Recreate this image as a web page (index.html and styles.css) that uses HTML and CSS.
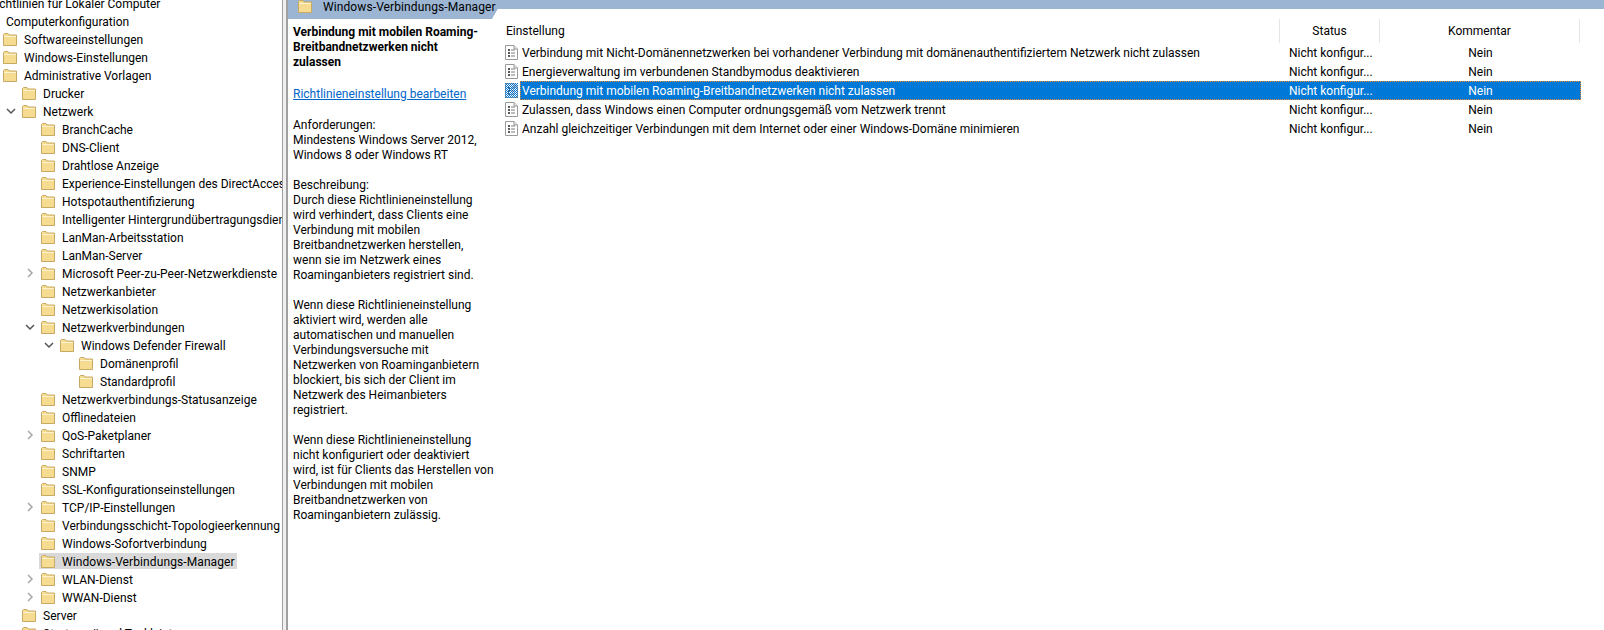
FILE: index.html
```html
<!DOCTYPE html>
<html lang="de">
<head>
  <meta charset="UTF-8">
  <title>Editor für lokale Gruppenrichtlinien</title>
  <link rel="stylesheet" href="styles.css">
</head>
<body>

  <svg class="defs" width="0" height="0">
    <symbol id="folder" viewBox="0 0 14 13">
      <path d="M.5 12.5V1.5l1-1h3.500l1 1.500h7.500v10.500z" fill="#f6dc91" stroke="#c8a963"/>
      <path d="M1 3.500h12" stroke="#fdf3cf"/>
    </symbol>
    <symbol id="policy" viewBox="0 0 13 15">
      <path d="M.5.500h8.500l3.500 3.500v10.500h-12z" fill="#fff" stroke="#9a9a9a"/>
      <path d="M9 .5v3.500h3.500" fill="#e6e6e6" stroke="#9a9a9a"/>
      <path d="M3 5h2M3 8h2M3 11h2" stroke="#222" stroke-width="1.400"/>
      <path d="M6 5h4M6 8h4M6 11h4" stroke="#7a7a7a"/>
    </symbol>
    <symbol id="open" viewBox="0 0 10 7">
      <path d="M1 1l4 4 4-4" fill="none" stroke="#555" stroke-width="1.500"/>
    </symbol>
    <symbol id="closed" viewBox="0 0 7 10">
      <path d="M1 1l4 4-4 4" fill="none" stroke="#a6a6a6" stroke-width="1.500"/>
    </symbol>
    <pattern id="dither" width="2" height="2" patternUnits="userSpaceOnUse">
      <rect width="1" height="1" fill="#0078d7"/>
      <rect x="1" y="1" width="1" height="1" fill="#0078d7"/>
    </pattern>
  </svg>

  <div class="window">

    <nav class="tree">
      <div class="row root-title"><span class="label">Richtlinien für Lokaler Computer</span></div>
      <div class="row root"><span class="label">Computerkonfiguration</span></div>
      <div class="row lvl-1"><span class="node"><svg class="folder"><use href="#folder"/></svg><span class="label">Softwareeinstellungen</span></span></div>
      <div class="row lvl-1"><span class="node"><svg class="folder"><use href="#folder"/></svg><span class="label">Windows-Einstellungen</span></span></div>
      <div class="row lvl-1"><span class="node"><svg class="folder"><use href="#folder"/></svg><span class="label">Administrative Vorlagen</span></span></div>
      <div class="row lvl-2"><span class="node"><svg class="folder"><use href="#folder"/></svg><span class="label">Drucker</span></span></div>
      <div class="row lvl-2"><svg class="arrow-open"><use href="#open"/></svg><span class="node"><svg class="folder"><use href="#folder"/></svg><span class="label">Netzwerk</span></span></div>
      <div class="row lvl-3"><span class="node"><svg class="folder"><use href="#folder"/></svg><span class="label">BranchCache</span></span></div>
      <div class="row lvl-3"><span class="node"><svg class="folder"><use href="#folder"/></svg><span class="label">DNS-Client</span></span></div>
      <div class="row lvl-3"><span class="node"><svg class="folder"><use href="#folder"/></svg><span class="label">Drahtlose Anzeige</span></span></div>
      <div class="row lvl-3"><span class="node"><svg class="folder"><use href="#folder"/></svg><span class="label">Experience-Einstellungen des DirectAccess-Clients</span></span></div>
      <div class="row lvl-3"><span class="node"><svg class="folder"><use href="#folder"/></svg><span class="label">Hotspotauthentifizierung</span></span></div>
      <div class="row lvl-3"><span class="node"><svg class="folder"><use href="#folder"/></svg><span class="label">Intelligenter Hintergrundübertragungsdienst</span></span></div>
      <div class="row lvl-3"><span class="node"><svg class="folder"><use href="#folder"/></svg><span class="label">LanMan-Arbeitsstation</span></span></div>
      <div class="row lvl-3"><span class="node"><svg class="folder"><use href="#folder"/></svg><span class="label">LanMan-Server</span></span></div>
      <div class="row lvl-3"><svg class="arrow-closed"><use href="#closed"/></svg><span class="node"><svg class="folder"><use href="#folder"/></svg><span class="label">Microsoft Peer-zu-Peer-Netzwerkdienste</span></span></div>
      <div class="row lvl-3"><span class="node"><svg class="folder"><use href="#folder"/></svg><span class="label">Netzwerkanbieter</span></span></div>
      <div class="row lvl-3"><span class="node"><svg class="folder"><use href="#folder"/></svg><span class="label">Netzwerkisolation</span></span></div>
      <div class="row lvl-3"><svg class="arrow-open"><use href="#open"/></svg><span class="node"><svg class="folder"><use href="#folder"/></svg><span class="label">Netzwerkverbindungen</span></span></div>
      <div class="row lvl-4"><svg class="arrow-open"><use href="#open"/></svg><span class="node"><svg class="folder"><use href="#folder"/></svg><span class="label">Windows Defender Firewall</span></span></div>
      <div class="row lvl-5"><span class="node"><svg class="folder"><use href="#folder"/></svg><span class="label">Domänenprofil</span></span></div>
      <div class="row lvl-5"><span class="node"><svg class="folder"><use href="#folder"/></svg><span class="label">Standardprofil</span></span></div>
      <div class="row lvl-3"><span class="node"><svg class="folder"><use href="#folder"/></svg><span class="label">Netzwerkverbindungs-Statusanzeige</span></span></div>
      <div class="row lvl-3"><span class="node"><svg class="folder"><use href="#folder"/></svg><span class="label">Offlinedateien</span></span></div>
      <div class="row lvl-3"><svg class="arrow-closed"><use href="#closed"/></svg><span class="node"><svg class="folder"><use href="#folder"/></svg><span class="label">QoS-Paketplaner</span></span></div>
      <div class="row lvl-3"><span class="node"><svg class="folder"><use href="#folder"/></svg><span class="label">Schriftarten</span></span></div>
      <div class="row lvl-3"><span class="node"><svg class="folder"><use href="#folder"/></svg><span class="label">SNMP</span></span></div>
      <div class="row lvl-3"><span class="node"><svg class="folder"><use href="#folder"/></svg><span class="label">SSL-Konfigurationseinstellungen</span></span></div>
      <div class="row lvl-3"><svg class="arrow-closed"><use href="#closed"/></svg><span class="node"><svg class="folder"><use href="#folder"/></svg><span class="label">TCP/IP-Einstellungen</span></span></div>
      <div class="row lvl-3"><span class="node"><svg class="folder"><use href="#folder"/></svg><span class="label">Verbindungsschicht-Topologieerkennung</span></span></div>
      <div class="row lvl-3"><span class="node"><svg class="folder"><use href="#folder"/></svg><span class="label">Windows-Sofortverbindung</span></span></div>
      <div class="row lvl-3"><span class="node current"><svg class="folder"><use href="#folder"/></svg><span class="label">Windows-Verbindungs-Manager</span></span></div>
      <div class="row lvl-3"><svg class="arrow-closed"><use href="#closed"/></svg><span class="node"><svg class="folder"><use href="#folder"/></svg><span class="label">WLAN-Dienst</span></span></div>
      <div class="row lvl-3"><svg class="arrow-closed"><use href="#closed"/></svg><span class="node"><svg class="folder"><use href="#folder"/></svg><span class="label">WWAN-Dienst</span></span></div>
      <div class="row lvl-2"><span class="node"><svg class="folder"><use href="#folder"/></svg><span class="label">Server</span></span></div>
      <div class="row lvl-2"><span class="node"><svg class="folder"><use href="#folder"/></svg><span class="label">Startmenü und Taskleiste</span></span></div>
    </nav>

    <div class="splitter"></div>

    <main class="content">
      <div class="band">
        <div class="tab">
          <svg class="folder"><use href="#folder"/></svg>
          <span>Windows-Verbindungs-Manager</span>
        </div>
      </div>

      <div class="panes">
        <section class="desc">
          <p class="desc-title">Verbindung mit mobilen Roaming-<br>Breitbandnetzwerken nicht<br>zulassen</p>
          <p class="desc-link"><a href="#">Richtlinieneinstellung bearbeiten</a></p>
          <p>Anforderungen:<br>Mindestens Windows Server 2012,<br>Windows 8 oder Windows RT</p>
          <p>Beschreibung:<br>Durch diese Richtlinieneinstellung<br>wird verhindert, dass Clients eine<br>Verbindung mit mobilen<br>Breitbandnetzwerken herstellen,<br>wenn sie im Netzwerk eines<br>Roaminganbieters registriert sind.</p>
          <p>Wenn diese Richtlinieneinstellung<br>aktiviert wird, werden alle<br>automatischen und manuellen<br>Verbindungsversuche mit<br>Netzwerken von Roaminganbietern<br>blockiert, bis sich der Client im<br>Netzwerk des Heimanbieters<br>registriert.</p>
          <p>Wenn diese Richtlinieneinstellung<br>nicht konfiguriert oder deaktiviert<br>wird, ist für Clients das Herstellen von<br>Verbindungen mit mobilen<br>Breitbandnetzwerken von<br>Roaminganbietern zulässig.</p>
        </section>

        <section class="list">
          <div class="list-head">
            <div class="col-name">Einstellung</div>
            <div class="col-status">Status</div>
            <div class="col-comment">Kommentar</div>
          </div>
          <div class="item">
            <svg class="policy"><use href="#policy"/></svg>
            <div class="cells">
              <div class="item-name">Verbindung mit Nicht-Domänennetzwerken bei vorhandener Verbindung mit domänenauthentifiziertem Netzwerk nicht zulassen</div>
              <div class="item-status">Nicht konfigur...</div>
              <div class="item-comment">Nein</div>
            </div>
          </div>
          <div class="item">
            <svg class="policy"><use href="#policy"/></svg>
            <div class="cells">
              <div class="item-name">Energieverwaltung im verbundenen Standbymodus deaktivieren</div>
              <div class="item-status">Nicht konfigur...</div>
              <div class="item-comment">Nein</div>
            </div>
          </div>
          <div class="item selected">
            <svg class="policy"><use href="#policy"/><rect class="dither" width="13" height="15"/></svg>
            <div class="cells">
              <div class="item-name">Verbindung mit mobilen Roaming-Breitbandnetzwerken nicht zulassen</div>
              <div class="item-status">Nicht konfigur...</div>
              <div class="item-comment">Nein</div>
            </div>
          </div>
          <div class="item">
            <svg class="policy"><use href="#policy"/></svg>
            <div class="cells">
              <div class="item-name">Zulassen, dass Windows einen Computer ordnungsgemäß vom Netzwerk trennt</div>
              <div class="item-status">Nicht konfigur...</div>
              <div class="item-comment">Nein</div>
            </div>
          </div>
          <div class="item">
            <svg class="policy"><use href="#policy"/></svg>
            <div class="cells">
              <div class="item-name">Anzahl gleichzeitiger Verbindungen mit dem Internet oder einer Windows-Domäne minimieren</div>
              <div class="item-status">Nicht konfigur...</div>
              <div class="item-comment">Nein</div>
            </div>
          </div>
        </section>
      </div>
    </main>

  </div>

</body>
</html>
```

FILE: styles.css
```css
html, body {
  margin: 0;
  height: 100%;
  overflow: hidden;
}

body {
  font-family: Roboto, "Open Sans", Arial, sans-serif;
  font-size: 12px;
  color: #000;
  background: #fff;
}

.defs {
  display: block;
  height: 0;
}

.window {
  display: flex;
  height: 630px;
}

/* left tree */
.tree {
  width: 282px;
  flex: none;
  overflow: hidden;
  margin-top: -6px;
}

.row {
  display: flex;
  align-items: center;
  height: 18px;
  white-space: nowrap;
  position: relative;
}

.row .label {
  padding-top: 2px;
}

.root-title {
  margin-left: -11px;
}

.root {
  padding-left: 6px;
}

.lvl-1 { padding-left: 3px; }
.lvl-2 { padding-left: 22px; }
.lvl-3 { padding-left: 41px; }
.lvl-4 { padding-left: 60px; }
.lvl-5 { padding-left: 79px; }

.node {
  display: flex;
  align-items: center;
  height: 16px;
}

.node.current {
  background: #d9d9d9;
  margin-left: -2px;
  padding-left: 2px;
  padding-right: 2px;
  letter-spacing: .1px;
}

.folder {
  width: 14px;
  height: 13px;
  flex: none;
}

.node .label {
  margin-left: 7px;
}

.arrow-open,
.arrow-closed {
  position: absolute;
}

.arrow-open {
  width: 10px;
  height: 7px;
}

.arrow-closed {
  width: 7px;
  height: 10px;
}

.lvl-2 .arrow-open { left: 6px; }
.lvl-3 .arrow-open { left: 25px; }
.lvl-4 .arrow-open { left: 44px; }
.lvl-3 .arrow-closed { left: 27px; }

/* splitter */
.splitter {
  width: 6px;
  flex: none;
  box-sizing: border-box;
  background: #f0f0f0;
  border-left: 1px solid #a0a0a0;
  border-right: 2px solid #a0a0a0;
}

/* right side */
.content {
  flex: 1;
  min-width: 0;
  display: flex;
  flex-direction: column;
}

.band {
  height: 9px;
  background: #9bb5d3;
}

.tab {
  display: flex;
  align-items: flex-start;
  gap: 11px;
  width: 210px;
  height: 19px;
  padding-left: 10px;
  box-sizing: border-box;
  background: #9bb5d3;
  clip-path: polygon(0 0, 100% 0, 100% 45%, calc(100% - 6px) 100%, 0 100%);
  position: relative;
  line-height: 14px;
  letter-spacing: .1px;
  white-space: nowrap;
}

.panes {
  display: flex;
  flex: 1;
  min-height: 0;
}

.desc {
  width: 202px;
  flex: none;
  margin-top: 16px;
  padding-left: 5px;
  box-sizing: border-box;
  line-height: 15px;
  white-space: nowrap;
}

.desc p {
  margin: 0 0 15px;
}

.desc .desc-title {
  font-weight: bold;
  margin-bottom: 17px;
}

.desc .desc-link {
  margin-bottom: 16px;
}

.desc-link a {
  color: #0066cc;
}

.list {
  flex: 1;
  min-width: 0;
}

.list-head {
  display: flex;
  height: 24px;
  align-items: stretch;
  margin-top: 10px;
  line-height: 24px;
}

.col-name {
  width: 790px;
  padding-left: 16px;
  box-sizing: border-box;
  border-right: 1px solid #e5e5e5;
}

.col-status {
  width: 100px;
  box-sizing: border-box;
  text-align: center;
  border-right: 1px solid #e5e5e5;
}

.col-comment {
  width: 200px;
  box-sizing: border-box;
  text-align: center;
  border-right: 1px solid #e5e5e5;
}

.item {
  display: flex;
  align-items: center;
  height: 19px;
  width: 1091px;
}

.policy {
  width: 13px;
  height: 15px;
  flex: none;
  margin-left: 15px;
}

.dither {
  fill: url(#dither);
}

.cells {
  display: flex;
  flex: 1;
  height: 100%;
  margin-left: 2px;
  line-height: 21px;
  white-space: nowrap;
}

.item-name {
  width: 760px;
  padding-left: 2px;
  box-sizing: border-box;
}

.item-status {
  width: 100px;
  padding-left: 9px;
  box-sizing: border-box;
}

.item-comment {
  width: 201px;
  text-align: center;
}

.selected .cells {
  background: #0078d7;
  color: #fff;
  outline: 1px dotted #f08a24;
  outline-offset: -1px;
}
```
